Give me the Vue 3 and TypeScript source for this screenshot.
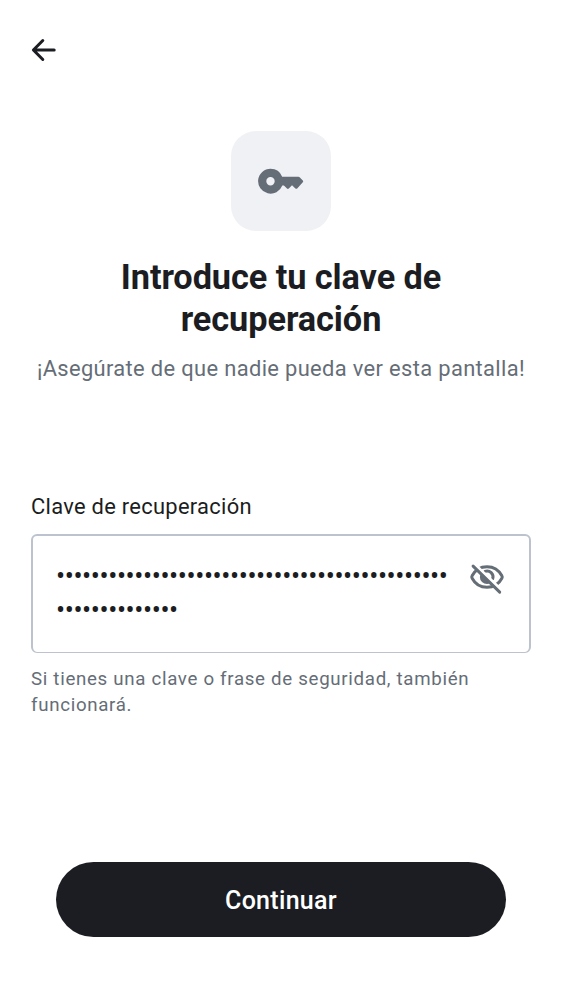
<script setup lang="ts">
import { ref } from 'vue'

const rows = ref<number[]>([45, 14])
const bullets = (count: number): string => '•'.repeat(count)
</script>

<template>
  <main class="screen">
    <button class="back" aria-label="Atrás">
      <svg width="26" height="24" viewBox="0 0 26 24">
        <path d="M11.8 2.5 2.4 12l9.4 9.5M2.8 12H23.2" />
      </svg>
    </button>

    <header class="intro">
      <div class="tile">
        <svg width="48" height="30" viewBox="0 0 48 30">
          <path
            fill-rule="evenodd"
            d="M13.5 2.7a12.5 12.5 0 0 1 11.7 8.1H41.5q.8 0 1.4.6l2.9 3.1q.8.8 0 1.7l-5.6 6.2q-.9.9-1.8 0L35 19.3l-3.2 3.2q-.9.8-1.8 0l-3.1-2.9h-1.6A12.5 12.5 0 1 1 13.5 2.7Zm0 8.3a4.2 4.2 0 1 0 0 8.4 4.2 4.2 0 0 0 0-8.4Z"
          />
        </svg>
      </div>
      <h1>Introduce tu clave de<br />recuperación</h1>
      <p>¡Asegúrate de que nadie pueda ver esta pantalla!</p>
    </header>

    <section class="field">
      <label>Clave de recuperación</label>
      <div class="box">
        <div class="dots">
          <div v-for="(count, i) in rows" :key="i">{{ bullets(count) }}</div>
        </div>
        <svg class="eye" width="38" height="36" viewBox="0 0 38 36">
          <mask id="gap">
            <rect width="38" height="36" fill="#fff" />
            <path d="M3 1.1 38 34.9" stroke="#000" stroke-width="3.6" />
          </mask>
          <g mask="url(#gap)">
            <path class="line" d="M4.1 18.2Q3.4 17 4.1 15.8C7.2 10 12.7 6.7 19 6.7S30.8 10 33.9 15.8Q34.6 17 33.9 18.2C30.8 24 25.3 27.3 19 27.3S7.2 24 4.1 18.2Z" />
            <path class="line" d="M17 11.3a6 6 0 0 1 7.7 7.5" />
            <path class="solid" d="M14 11.8a7.2 7.2 0 1 0 10.2 10.2Z" />
          </g>
          <path class="line" d="M5.1 6.1 31.7 32.1" />
        </svg>
      </div>
      <p class="hint">Si tienes una clave o frase de seguridad, también<br />funcionará.</p>
    </section>

    <button class="submit">Continuar</button>
  </main>
</template>

<style>
body {
  background: #fff;
}
</style>

<style scoped>
.screen {
  box-sizing: border-box;
  width: 562px;
  height: 1000px;
  display: flex;
  flex-direction: column;
  font-family: Roboto, "Liberation Sans", sans-serif;
  color: #1b1d22;
  background: #fff;
  overflow: hidden;
}

button {
  border: 0;
  padding: 0;
  font-family: inherit;
}

svg {
  display: block;
}

.back {
  width: 26px;
  height: 24px;
  margin: 38px 0 0 31px;
  background: none;
}

.back path {
  fill: none;
  stroke: #1b1d22;
  stroke-width: 3;
  stroke-linecap: round;
  stroke-linejoin: round;
}

.intro {
  display: flex;
  flex-direction: column;
  align-items: center;
  margin-top: 69px;
  text-align: center;
}

.tile {
  display: flex;
  align-items: center;
  justify-content: center;
  width: 100px;
  height: 100px;
  border-radius: 25px;
  background: #f0f1f5;
}

.tile path {
  fill: #656d77;
}

h1 {
  margin: 25px 0 0;
  font-size: 34.3px;
  line-height: 42px;
  letter-spacing: -0.08px;
  font-weight: 700;
  white-space: nowrap;
}

.intro p {
  margin: 13px 0 0;
  font-size: 21.9px;
  line-height: 32px;
  letter-spacing: 0.35px;
  color: #656d77;
  white-space: nowrap;
}

.field {
  margin: 107px 31px 0;
}

label {
  display: block;
  font-size: 21.9px;
  line-height: 30px;
  letter-spacing: 0.29px;
}

.box {
  box-sizing: border-box;
  display: flex;
  justify-content: space-between;
  height: 119px;
  margin-top: 12px;
  padding: 23px 23px 0 23px;
  border: 2px solid #bdc3ce;
  border-bottom-width: 1px;
  border-radius: 6px;
}

.dots {
  font-size: 27px;
  line-height: 34px;
  letter-spacing: -0.41px;
  white-space: nowrap;
}

.eye {
  margin-top: 1px;
}

.line {
  fill: none;
  stroke: #656d77;
  stroke-width: 3;
  stroke-linecap: round;
}

.solid {
  fill: #656d77;
}

.hint {
  margin: 13px 0 0;
  font-size: 18.7px;
  line-height: 26px;
  letter-spacing: 0.69px;
  color: #656d77;
  white-space: nowrap;
}

.submit {
  width: 450px;
  height: 75px;
  margin: 144px 0 0 56px;
  padding-top: 1px;
  border-radius: 38px;
  background: #1b1d22;
  color: #fff;
  font-size: 25px;
  font-weight: 500;
  letter-spacing: 0.3px;
}
</style>
